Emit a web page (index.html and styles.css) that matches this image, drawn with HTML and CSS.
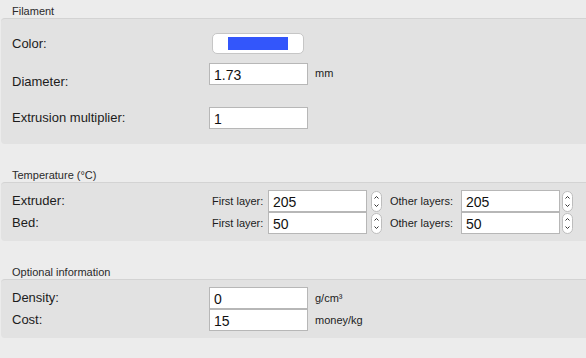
FILE: index.html
```html
<!DOCTYPE html>
<html lang="en">
    <head>
        <title>Filament Settings</title>
        <meta charset="UTF-8">
        <link rel="stylesheet" href="styles.css">
    </head>
    <body>
        <section class="group">
            <h5>Filament</h5>
            <div class="panel filament">
                <div class="row color-row">
                    <label>Color:</label>
                    <button class="swatch"><span></span></button>
                </div>
                <div class="row diameter-row">
                    <label class="low">Diameter:</label>
                    <input type="text" value="1.73">
                    <span class="unit">mm</span>
                </div>
                <div class="row extrusion-row">
                    <label>Extrusion multiplier:</label>
                    <input type="text" value="1">
                </div>
            </div>
        </section>

        <section class="group">
            <h5>Temperature (°C)</h5>
            <div class="panel compact">
                <div class="row temp">
                    <label>Extruder:</label>
                    <span class="sub">First layer:</span>
                    <input type="text" value="205">
                    <span class="spin"><svg width="11" height="21" viewBox="0 0 11 21"><rect x="0.5" y="0.5" width="10" height="20" rx="5" fill="#fff" stroke="#bdbdbd"/><path d="M3.5 7.5 L5.5 5.5 L7.5 7.5 M3.5 13.5 L5.5 15.5 L7.5 13.5" fill="none" stroke="#333" stroke-width="1"/></svg></span>
                    <span class="sub other">Other layers:</span>
                    <input type="text" value="205">
                    <span class="spin last"><svg width="11" height="21" viewBox="0 0 11 21"><rect x="0.5" y="0.5" width="10" height="20" rx="5" fill="#fff" stroke="#bdbdbd"/><path d="M3.5 7.5 L5.5 5.5 L7.5 7.5 M3.5 13.5 L5.5 15.5 L7.5 13.5" fill="none" stroke="#333" stroke-width="1"/></svg></span>
                </div>
                <div class="row temp">
                    <label>Bed:</label>
                    <span class="sub">First layer:</span>
                    <input type="text" value="50">
                    <span class="spin"><svg width="11" height="21" viewBox="0 0 11 21"><rect x="0.5" y="0.5" width="10" height="20" rx="5" fill="#fff" stroke="#bdbdbd"/><path d="M3.5 7.5 L5.5 5.5 L7.5 7.5 M3.5 13.5 L5.5 15.5 L7.5 13.5" fill="none" stroke="#333" stroke-width="1"/></svg></span>
                    <span class="sub other">Other layers:</span>
                    <input type="text" value="50">
                    <span class="spin last"><svg width="11" height="21" viewBox="0 0 11 21"><rect x="0.5" y="0.5" width="10" height="20" rx="5" fill="#fff" stroke="#bdbdbd"/><path d="M3.5 7.5 L5.5 5.5 L7.5 7.5 M3.5 13.5 L5.5 15.5 L7.5 13.5" fill="none" stroke="#333" stroke-width="1"/></svg></span>
                </div>
            </div>
        </section>

        <section class="group">
            <h5>Optional information</h5>
            <div class="panel compact">
                <div class="row">
                    <label>Density:</label>
                    <input type="text" value="0">
                    <span class="unit">g/cm³</span>
                </div>
                <div class="row">
                    <label>Cost:</label>
                    <input type="text" value="15">
                    <span class="unit">money/kg</span>
                </div>
            </div>
        </section>
    </body>
</html>
```

FILE: styles.css
```css
body {
    margin: 0;
    background-color: #ececec;
    font-family: 'Liberation Sans', Arial, sans-serif;
    color: #1c1c1c;
    font-size: 13px;
}

.group + .group {
    margin-top: 20px;
}

h5 {
    margin: 0;
    padding: 4px 0 0 12px;
    font-size: 11px;
    font-weight: normal;
    line-height: 14px;
    color: #2a2a2a;
}

.panel {
    margin-left: 1px;
    background-color: #e2e2e2;
    border-top: 1px solid #d3d3d3;
    border-radius: 4px 0 0 4px;
    padding: 14px 0 15px 11px;
}

.panel.compact {
    padding: 7px 0 7px 11px;
}

.row {
    display: flex;
    align-items: center;
    height: 22px;
}

.row label {
    width: 197px;
    line-height: 16px;
}

.color-row {
    height: 21px;
}

.diameter-row {
    margin-top: 9px;
    align-items: flex-start;
}

.diameter-row .unit {
    margin-top: 4px;
}

label.low {
    padding-top: 11px;
}

.extrusion-row {
    margin-top: 22px;
}

.swatch {
    margin-left: 3px;
    width: 92px;
    height: 21px;
    background-color: #fff;
    border: 1px solid #c6c6c6;
    border-radius: 5px;
    padding: 0;
    display: flex;
    align-items: center;
    justify-content: center;
}

    .swatch span {
        display: block;
        width: 60px;
        height: 13px;
        background-color: #3356fb;
    }

input {
    box-sizing: border-box;
    width: 99px;
    height: 22px;
    margin: 0;
    padding: 1px 4px 0;
    border: 1px solid #b7b7b7;
    background-color: #fff;
    font-family: 'Liberation Sans', Arial, sans-serif;
    font-size: 14px;
    color: #111;
    outline: none;
}

.unit {
    margin-left: 7px;
    font-size: 11px;
}

.temp label {
    width: 200px;
}

.sub {
    font-size: 11px;
    width: 56px;
    white-space: nowrap;
}

.sub.other {
    width: 71px;
}

.spin {
    display: flex;
    margin-left: 4px;
    margin-right: 8px;
    height: 22px;
    align-items: center;
}

.spin.last {
    margin-left: 2px;
    margin-right: 0;
}
```
